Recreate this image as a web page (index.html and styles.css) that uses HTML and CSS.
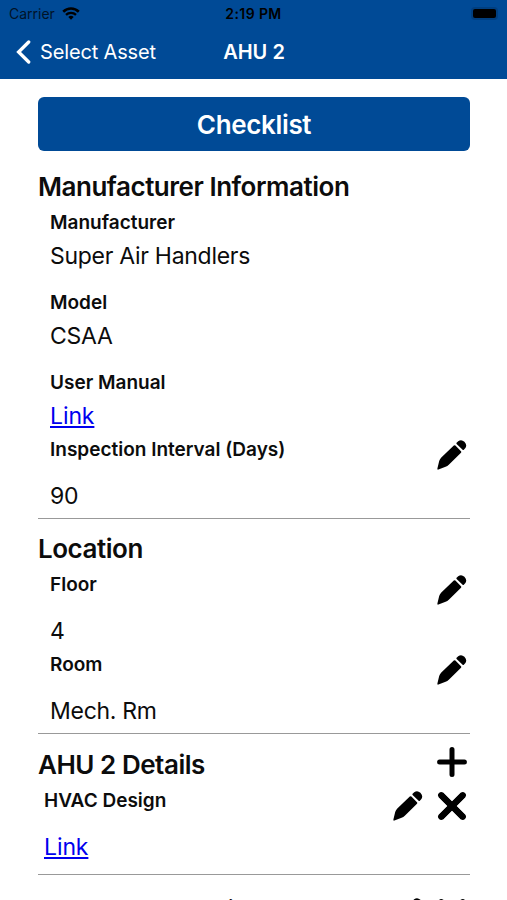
FILE: index.html
```html
<!DOCTYPE html>
<html lang="en">
<head>
  <meta charset="UTF-8">
  <meta name="viewport" content="width=device-width, initial-scale=1.0">
  <title>AHU 2</title>
  <link rel="stylesheet" href="styles.css">
</head>
<body>
  <svg class="symbols">
    <symbol id="pencil" viewBox="0 0 32 32">
      <path d="M1.4 29.6 L3.2 22 Q3.8 20 5.3 18.5 L17.8 6.4 Q18.6 5.8 19.4 6.6 L25 12.2 Q25.7 13 25 13.7 L12.8 25.7 Q11.4 27 9.6 27.8 L2.4 30.6 Q1.1 31 1.4 29.6 Z"/>
      <path d="M20.6 3.8 L22.2 2.3 Q25.2 -.1 28.4 2.7 Q31.6 6 29.2 9.2 L27.6 10.9 Q27.1 11.3 26.6 10.8 L20.6 4.9 Q20.1 4.3 20.6 3.8 Z"/>
    </symbol>
    <symbol id="plus" viewBox="0 0 32 32">
      <path d="M16 3.6v24.8M3.6 16h24.8" stroke="#000" stroke-width="5" stroke-linecap="round"/>
    </symbol>
    <symbol id="cross" viewBox="0 0 32 32">
      <path d="M4.8 4.8l22.4 22.4M27.2 4.8L4.8 27.2" stroke="#000" stroke-width="6.2"/>
      <path d="M5.2 5.2l21.6 21.6M26.8 5.2L5.2 26.8" stroke="#000" stroke-width="6.2" stroke-linecap="round"/>
    </symbol>
  </svg>

  <header class="header">
    <div class="status">
      <div class="carrier">
        <span>Carrier</span>
        <svg class="wifi" viewBox="0 0 18 13" fill="none" stroke="#000">
          <path d="M1.2 4.7a11.2 11.2 0 0 1 15.6 0" stroke-width="2.6"/>
          <path d="M4 7.8a7.2 7.2 0 0 1 10 0" stroke-width="2.3"/>
          <path d="M9 12.7L6.3 10a3.9 3.9 0 0 1 5.4 0z" fill="#000" stroke="none"/>
        </svg>
      </div>
      <span class="time">2:19 PM</span>
      <div class="battery"><div class="level"></div></div>
    </div>
    <nav class="nav">
      <a class="back">
        <svg class="chevron" viewBox="0 0 15 24" fill="none">
          <path d="M12.7 2L2.6 12l10.1 10" stroke="#fff" stroke-width="3.3" stroke-linecap="round"/>
        </svg>
        <span>Select Asset</span>
      </a>
      <h1 class="title">AHU 2</h1>
    </nav>
  </header>

  <main class="content">
    <button class="checklist">Checklist</button>

    <section class="section">
      <h2>Manufacturer Information</h2>
      <div class="field">
        <h3>Manufacturer</h3>
        <p>Super Air Handlers</p>
      </div>
      <div class="field">
        <h3>Model</h3>
        <p>CSAA</p>
      </div>
      <div class="field linked">
        <h3>User Manual</h3>
        <p><a href="#">Link</a></p>
      </div>
      <div class="field editable">
        <div class="row">
          <h3>Inspection Interval (Days)</h3>
          <svg class="icon"><use href="#pencil"/></svg>
        </div>
        <p>90</p>
      </div>
    </section>

    <section class="section">
      <h2>Location</h2>
      <div class="field editable">
        <div class="row">
          <h3>Floor</h3>
          <svg class="icon"><use href="#pencil"/></svg>
        </div>
        <p>4</p>
      </div>
      <div class="field editable">
        <div class="row">
          <h3>Room</h3>
          <svg class="icon"><use href="#pencil"/></svg>
        </div>
        <p>Mech. Rm</p>
      </div>
    </section>

    <section class="section details">
      <div class="row heading">
        <h2>AHU 2 Details</h2>
        <svg class="icon"><use href="#plus"/></svg>
      </div>
      <div class="field editable">
        <div class="row">
          <h3>HVAC Design</h3>
          <svg class="icon"><use href="#pencil"/></svg>
          <svg class="icon"><use href="#cross"/></svg>
        </div>
        <p><a href="#">Link</a></p>
      </div>
    </section>

    <section class="section details next">
      <div class="field editable">
        <div class="row">
          <h3>Belt Removed Spraying</h3>
          <svg class="icon"><use href="#pencil"/></svg>
          <svg class="icon"><use href="#cross"/></svg>
        </div>
      </div>
    </section>
  </main>
</body>
</html>
```
FILE: styles.css
```css
html {
  height: 900px;
  overflow: hidden;
}
body {
  font-family: Inter, "Liberation Sans", sans-serif;
  background: #fff;
  color: #0c0c0c;
  margin: 0;
  height: 900px;
  overflow: hidden;
}
h1, h2, h3, p {
  margin: 0;
}
.symbols {
  display: none;
}
.header {
  background: #004a96;
  height: 79px;
}
.status {
  display: grid;
  grid-template-columns: 1fr auto 1fr;
  align-items: center;
  height: 27px;
  padding: 0 9px;
  color: #000;
  font-size: 14px;
}
.carrier {
  display: flex;
  align-items: center;
  gap: 7px;
  color: #001328;
}
.wifi {
  width: 18px;
  height: 13px;
}
.time {
  font-weight: 600;
  letter-spacing: 0.4px;
}
.battery {
  justify-self: end;
  box-sizing: border-box;
  width: 27px;
  height: 13px;
  padding: 2px;
  border-radius: 4px;
  background: #003f80;
}
.level {
  height: 9px;
  border-radius: 2px;
  background: #000;
}
.nav {
  display: grid;
  grid-template-columns: 1fr auto 1fr;
  align-items: center;
  height: 50px;
  padding: 0 15px 0 16px;
  color: #fff;
}
.back {
  display: flex;
  align-items: center;
  gap: 9px;
  font-size: 20px;
  letter-spacing: -0.15px;
}
.chevron {
  width: 15px;
  height: 24px;
}
.title {
  font-size: 20px;
  font-weight: 600;
}
.content {
  height: 803px;
  overflow: hidden;
  padding: 18px 37px 0 38px;
}
.checklist {
  display: block;
  width: 100%;
  height: 54px;
  border: none;
  border-radius: 6px;
  background: #004a96;
  color: #fff;
  font-family: inherit;
  font-size: 26px;
  font-weight: 600;
  letter-spacing: -0.35px;
}
.section {
  border-bottom: 1px solid #999;
  padding: 14.5px 0 3px;
}
.checklist + .section {
  padding-top: 20px;
}
h2 {
  flex: 1;
  font-size: 26px;
  font-weight: 600;
  letter-spacing: -0.47px;
  line-height: 32px;
  margin-bottom: 3.5px;
}
h3 {
  flex: 1;
  font-size: 19px;
  font-weight: 600;
  line-height: 24px;
}
.field {
  height: 76px;
  padding: 4px 0 0 12px;
}
.field p {
  font-size: 23px;
  letter-spacing: -0.28px;
  line-height: 28px;
  margin-top: 7.5px;
}
.field a {
  color: #0000ee;
  letter-spacing: -0.1px;
}
.linked {
  height: 63.5px;
}
.row {
  display: flex;
}
.icon {
  width: 32px;
  height: 32px;
  margin: 1px 2px 0 10px;
}
.field.editable {
  height: 76.5px;
}
.editable .row {
  height: 34px;
}
.field.editable p {
  margin-top: 10px;
}
.details {
  padding: 15px 0 9px;
}
.details .heading {
  height: 36px;
}
.heading .icon {
  margin-top: -3px;
}
.details .field {
  padding-left: 6px;
}
.details.next {
  padding-top: 17px;
}
.next .icon {
  margin-top: 1px;
}
```
